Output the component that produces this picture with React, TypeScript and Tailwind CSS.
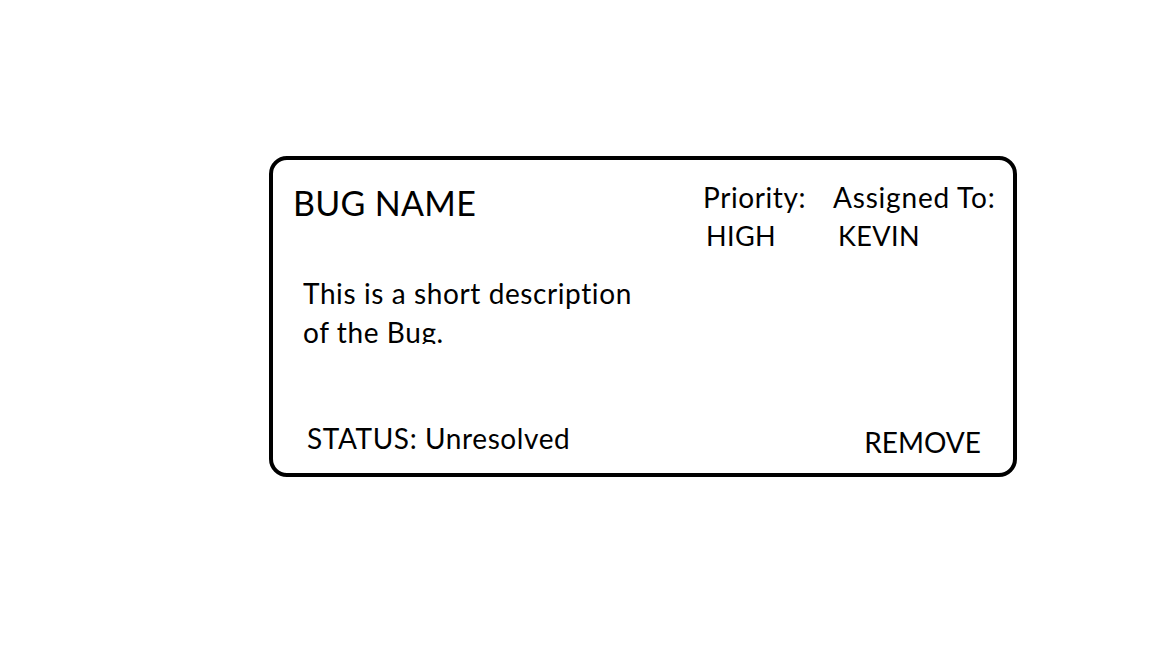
export default function App() {
  return (
    <div className="min-h-[648px] w-[1152px] bg-white pt-[156px] pl-[269px] text-black [font-variant-ligatures:none]" style={{ fontFamily: 'Lato, "Open Sans", sans-serif' }}>
      <div className="flex h-[321px] w-[748px] flex-col rounded-[18px] border-4 border-black bg-white">
        <div className="flex items-start pt-[23px]">
          <h1 className="ml-[20px] mt-[3px] w-[410px] text-[34px] font-normal leading-none tracking-[0.3px]">BUG NAME</h1>
          <div className="flex w-[130px] flex-col">
            <span className="text-[28px] leading-none tracking-[0.6px]">Priority:</span>
            <span className="ml-[3px] mt-[11px] text-[27px] leading-none tracking-[0.4px]">HIGH</span>
          </div>
          <div className="flex flex-col">
            <span className="text-[28px] leading-none tracking-[0.8px]">Assigned To:</span>
            <span className="ml-[5px] mt-[11px] text-[27px] leading-none tracking-[0.4px]">KEVIN</span>
          </div>
        </div>
        <p className="ml-[30px] mt-[25px] h-[70px] w-[345px] overflow-hidden text-[28px] leading-[39px] tracking-[0.6px]">
          This is a short description of the Bug.
        </p>
        <div className="mt-[80px] flex items-start">
          <span className="ml-[34px] text-[28px] leading-none tracking-[0.6px]">STATUS: Unresolved</span>
          <button className="ml-auto mr-[32px] mt-[4px] text-[28px] leading-none tracking-[0px]">REMOVE</button>
        </div>
      </div>
    </div>
  );
}
